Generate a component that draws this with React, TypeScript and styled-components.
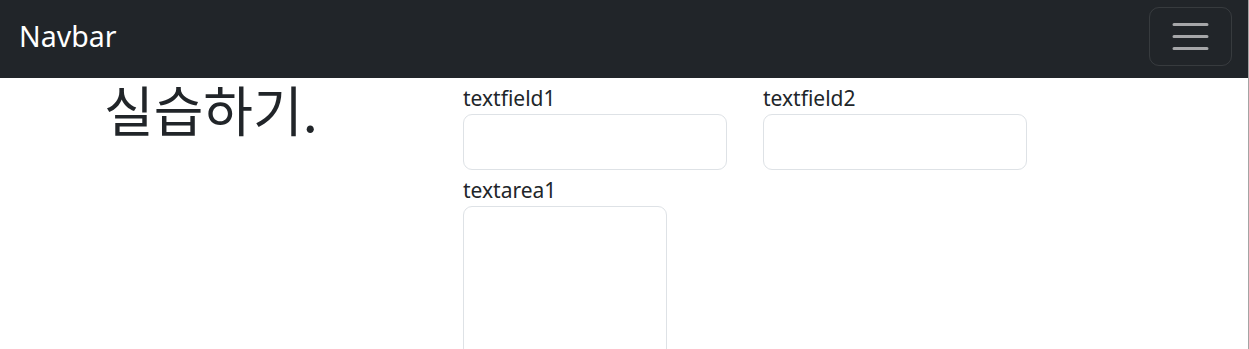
import styled, { createGlobalStyle } from 'styled-components'

const GlobalStyle = createGlobalStyle`
	* {
		box-sizing: border-box;
	}
	body {
		margin: 0;
		background: #ffffff;
		color: #212529;
		font-family: "Segoe UI", "Noto Sans", "Noto Sans CJK KR", sans-serif;
		overflow: hidden;
	}
`;

const Page = styled.div`
	min-height: 100vh;
	border-right: 1px solid #a4a4a4;
`;

const NavBar = styled.nav`
	display: flex;
	align-items: center;
	justify-content: space-between;
	height: 78px;
	padding: 0 16px 5px 19px;
	background-color: #212529;
`;

const Brand = styled.a`
	color: #ffffff;
	font-family: "Noto Sans", sans-serif;
	font-size: 28.5px;
	line-height: 1;
	text-decoration: none;
`;

const Toggler = styled.button`
	display: flex;
	align-items: center;
	justify-content: center;
	width: 83px;
	height: 59px;
	padding: 0;
	background: transparent;
	border: 1px solid rgba(255, 255, 255, 0.1);
	border-radius: 10px;
`;

const Main = styled.main`
	display: flex;
	align-items: flex-start;
	padding-left: 104px;
`;

const Title = styled.h1`
	width: 359px;
	margin: 0;
	font-family: "Noto Sans CJK KR", sans-serif;
	font-size: 54px;
	font-weight: 400;
	line-height: 62px;
	color: #212529;
`;

const Form = styled.form`
	display: grid;
	grid-template-columns: 264px 264px;
	column-gap: 36px;
`;

const Field = styled.div`
	display: flex;
	flex-direction: column;
`;

const Label = styled.label`
	height: 36px;
	font-family: "Noto Sans", sans-serif;
	font-size: 21px;
	line-height: 40px;
	color: #212529;
`;

const Input = styled.input`
	height: 56px;
	width: 100%;
	border: 1px solid #dee2e6;
	border-radius: 9px;
	background: #ffffff;
`;

const TextArea = styled.textarea<{ $width: number }>`
	width: ${(p) => p.$width}px;
	height: 180px;
	border: 1px solid #dee2e6;
	border-radius: 9px;
	background: #ffffff;
	resize: none;
`;

function MenuIcon() {
	return (
		<svg width="45" height="45" viewBox="0 0 30 30" aria-hidden="true">
			<path
				d="M4 7h22M4 15h22M4 23h22"
				stroke="rgba(255,255,255,0.6)"
				strokeWidth="2"
				strokeLinecap="round"
			/>
		</svg>
	);
}

export default function App() {
	return (
		<Page>
			<GlobalStyle />
			<NavBar>
				<Brand href="#">Navbar</Brand>
				<Toggler type="button" aria-label="Toggle navigation">
					<MenuIcon />
				</Toggler>
			</NavBar>
			<Main>
				<Title>실습하기.</Title>
				<Form>
					<Field>
						<Label htmlFor="tf1">textfield1</Label>
						<Input id="tf1" type="text" />
					</Field>
					<Field>
						<Label htmlFor="tf2">textfield2</Label>
						<Input id="tf2" type="text" />
					</Field>
					<Field>
						<Label htmlFor="ta1">textarea1</Label>
						<TextArea id="ta1" $width={204} />
					</Field>
				</Form>
			</Main>
		</Page>
	);
}
